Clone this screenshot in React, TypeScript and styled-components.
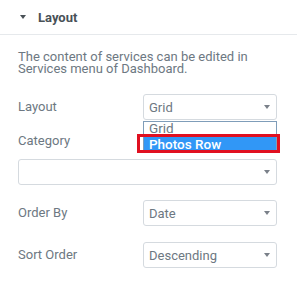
import styled, { createGlobalStyle } from "styled-components";

const GlobalStyle = createGlobalStyle`
  html, body {
    margin: 0;
    padding: 0;
    background: #ffffff;
  }
  body {
    font-family: Roboto, "Liberation Sans", Arial, sans-serif;
  }
`;

const Panel = styled.div`
  width: 297px;
  height: 283px;
  background: #ffffff;
  color: #6d7882;
  font-size: 13px;
  overflow: hidden;
`;

const Header = styled.div`
  display: flex;
  align-items: center;
  gap: 12px;
  height: 35px;
  padding-left: 20px;
  border-bottom: 1px solid #e6e9ec;
  box-sizing: border-box;
`;

const Caret = styled.span<{ $size?: number; $color?: string }>`
  display: inline-block;
  width: 0;
  height: 0;
  border-left: ${(p) => p.$size ?? 3.5}px solid transparent;
  border-right: ${(p) => p.$size ?? 3.5}px solid transparent;
  border-top: ${(p) => (p.$size ?? 3.5) + 0.5}px solid ${(p) => p.$color ?? "#495157"};
`;

const HeaderTitle = styled.span`
  font-weight: 700;
  font-size: 13px;
  color: #495157;
`;

const Body = styled.div`
  padding: 16px 20px 0 18px;
  display: flex;
  flex-direction: column;
`;

const Description = styled.p`
  margin: 0 0 20px 0;
  font-size: 13px;
  line-height: 11.5px;
  color: #6d7882;
`;

const Row = styled.div<{ $mt?: number }>`
  display: flex;
  align-items: center;
  justify-content: space-between;
  margin-top: ${(p) => p.$mt ?? 0}px;
`;

const Label = styled.span<{ $mt?: number }>`
  font-size: 13px;
  color: #6d7882;
  margin-top: ${(p) => p.$mt ?? 0}px;
  line-height: 16px;
`;

const SelectWrap = styled.div<{ $full?: boolean }>`
  position: relative;
  width: ${(p) => (p.$full ? "259px" : "134px")};
  margin-top: ${(p) => (p.$full ? "10px" : "0")};
`;

const SelectBox = styled.div`
  display: flex;
  align-items: center;
  justify-content: space-between;
  height: 26px;
  box-sizing: border-box;
  padding: 0 6px 0 5px;
  border: 1px solid #d5dadf;
  border-radius: 3px;
  font-size: 13px;
  color: #6d7882;
`;

const Dropdown = styled.div`
  position: absolute;
  top: 27px;
  left: 0;
  right: 0;
  border: 1px solid #7f9db9;
  border-bottom: none;
  background: #ffffff;
`;

const Option = styled.div<{ $active?: boolean }>`
  height: ${(p) => (p.$active ? "15px" : "13px")};
  line-height: ${(p) => (p.$active ? "15px" : "13px")};
  padding-left: 5px;
  margin-top: ${(p) => (p.$active ? "2px" : "0")};
  font-size: 13.5px;
  font-weight: ${(p) => (p.$active ? 500 : 400)};
  color: ${(p) => (p.$active ? "#ffffff" : "#6d7882")};
  background: ${(p) => (p.$active ? "#3197f6" : "transparent")};
`;

const Highlight = styled.div`
  position: absolute;
  left: -7px;
  right: -4px;
  top: 12px;
  height: 19px;
  border: 3px solid #e01020;
  box-sizing: border-box;
  pointer-events: none;
`;

const Select = ({
  value,
  full,
  open,
}: {
  value: string;
  full?: boolean;
  open?: boolean;
}) => (
  <SelectWrap $full={full}>
    <SelectBox>
      <span>{value}</span>
      <Caret $size={3.5} $color="#7a8089" />
    </SelectBox>
    {open && (
      <Dropdown>
        <Option>Grid</Option>
        <Option $active>Photos Row</Option>
        <Highlight />
      </Dropdown>
    )}
  </SelectWrap>
);

export default function App() {
  return (
    <Panel>
      <GlobalStyle />
      <Header>
        <Caret />
        <HeaderTitle>Layout</HeaderTitle>
      </Header>
      <Body>
        <Description>
          The content of services can be edited in
          <br />
          Services menu of Dashboard.
        </Description>
        <Row>
          <Label>Layout</Label>
          <Select value="Grid" open />
        </Row>
        <Label $mt={13}>Category</Label>
        <Select value="" full />
        <Row $mt={15}>
          <Label>Order By</Label>
          <Select value="Date" />
        </Row>
        <Row $mt={16}>
          <Label>Sort Order</Label>
          <Select value="Descending" />
        </Row>
      </Body>
    </Panel>
  );
}
